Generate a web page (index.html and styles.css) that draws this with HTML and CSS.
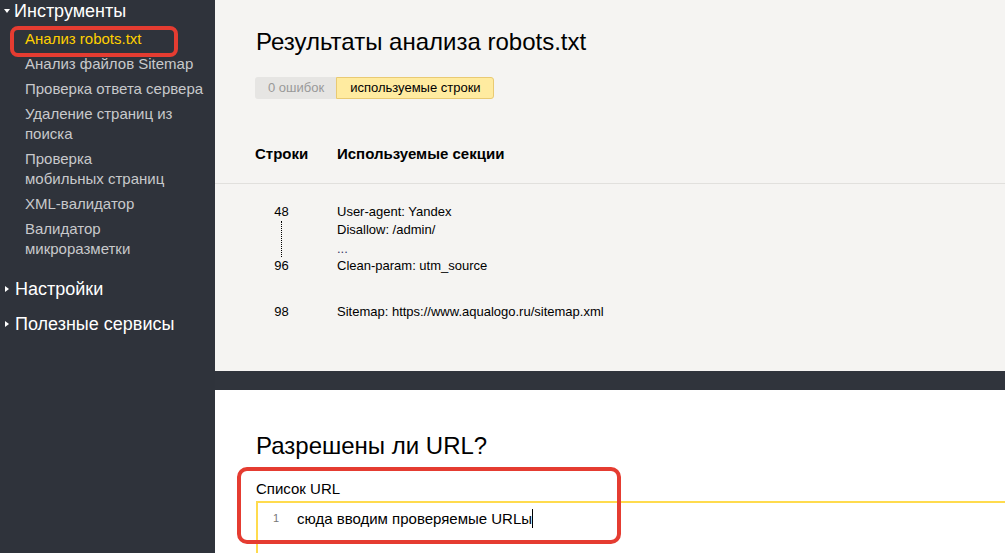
FILE: index.html
```html
<!DOCTYPE html>
<html lang="ru">
<head>
    <meta charset="UTF-8">
    <title>Анализ robots.txt</title>
    <link rel="stylesheet" href="styles.css">
</head>
<body>
    <div class="page">
        <!-- боковое меню -->
        <div class="sidebar">
            <div class="nav-group">
                <div class="nav-title"><span class="arrow-down"></span>Инструменты</div>
                <ul class="nav-list">
                    <li class="active">Анализ robots.txt</li>
                    <li>Анализ файлов Sitemap</li>
                    <li>Проверка ответа сервера</li>
                    <li>Удаление страниц из поиска</li>
                    <li>Проверка<br>мобильных страниц</li>
                    <li>XML-валидатор</li>
                    <li>Валидатор<br>микроразметки</li>
                </ul>
            </div>
            <div class="nav-group">
                <div class="nav-title"><span class="arrow-right"></span>Настройки</div>
            </div>
            <div class="nav-group">
                <div class="nav-title"><span class="arrow-right"></span>Полезные сервисы</div>
            </div>
            <div class="mark mark-nav"></div>
        </div>

        <div class="main">
            <!-- результаты анализа -->
            <div class="results">
                <h1 class="heading">Результаты анализа robots.txt</h1>
                <div class="tabs">
                    <div class="tab">0 ошибок</div>
                    <div class="tab tab-active">используемые строки</div>
                </div>
                <div class="table-head">
                    <div class="col-num">Строки</div>
                    <div>Используемые секции</div>
                </div>
                <div class="table-body">
                    <div class="row">
                        <div class="col-num range">
                            <span>48</span>
                            <span class="dots"></span>
                            <span>96</span>
                        </div>
                        <div class="lines">
                            <div>User-agent: Yandex</div>
                            <div>Disallow: /admin/</div>
                            <div class="ellipsis">...</div>
                            <div>Clean-param: utm_source</div>
                        </div>
                    </div>
                    <div class="row row-gap">
                        <div class="col-num">98</div>
                        <div class="lines">
                            <div>Sitemap: https://www.aqualogo.ru/sitemap.xml</div>
                        </div>
                    </div>
                </div>
            </div>

            <div class="divider"></div>

            <!-- проверка URL -->
            <div class="check">
                <h2 class="heading">Разрешены ли URL?</h2>
                <div class="label">Список URL</div>
                <div class="editor">
                    <div class="editor-line">
                        <span class="line-no">1</span>
                        <span class="line-text">сюда вводим проверяемые URLы</span><span class="caret"></span>
                    </div>
                </div>
                <div class="mark mark-urls"></div>
            </div>
        </div>
    </div>
</body>
</html>
```

FILE: styles.css
```css
body {
    margin: 0;
    font-family: "Liberation Sans", Arial, sans-serif;
    color: #000;
    overflow: hidden;
}

.page {
    display: flex;
    width: 1005px;
    height: 553px;
    overflow: hidden;
}

/* боковое меню */
.sidebar {
    position: relative;
    width: 215px;
    flex-shrink: 0;
    background-color: #2f333b;
    display: flex;
    flex-direction: column;
    gap: 13px;
}

.nav-title {
    display: flex;
    align-items: center;
    font-size: 18px;
    line-height: 22px;
    color: #fff;
}

.arrow-down {
    width: 0;
    height: 0;
    margin: 0 4px 0 4px;
    border-left: 3.5px solid transparent;
    border-right: 3.5px solid transparent;
    border-top: 4px solid #fff;
}

.arrow-right {
    width: 0;
    height: 0;
    margin: 0 6px 0 5px;
    border-top: 3.5px solid transparent;
    border-bottom: 3.5px solid transparent;
    border-left: 4px solid #fff;
}

.nav-list {
    list-style: none;
    margin: 7px 0 0;
    padding: 0 10px 6px 25px;
    display: flex;
    flex-direction: column;
    gap: 5px;
}

    .nav-list li {
        font-size: 15px;
        line-height: 20px;
        color: #c8c9cb;
    }

    .nav-list li.active {
        color: #ffd000;
    }

/* красные пометки поверх скриншота */
.mark {
    position: absolute;
    border: 4px solid #e53c31;
    border-radius: 8px;
    box-sizing: border-box;
}

.mark-nav {
    left: 10px;
    top: 26px;
    width: 168px;
    height: 31px;
}

.mark-urls {
    left: 22px;
    top: 77px;
    width: 384px;
    height: 77px;
    border-radius: 10px;
}

/* основная часть */
.main {
    flex: 1;
    display: flex;
    flex-direction: column;
    min-width: 0;
}

    .main > div {
        flex-shrink: 0;
    }

.heading {
    margin: 0;
    font-size: 24px;
    line-height: 28px;
    font-weight: normal;
}

.results {
    background-color: #f5f4f2;
    padding-top: 28px;
    padding-bottom: 50px;
}

    .results .heading {
        padding-left: 41px;
    }

.tabs {
    display: flex;
    margin: 21px 0 0 40px;
    font-size: 13px;
}

.tab {
    height: 22px;
    line-height: 22px;
    padding: 0 12px 0 13px;
    background-color: #e6e5e3;
    color: #999;
    border-radius: 3px 0 0 3px;
}

.tab-active {
    box-sizing: border-box;
    padding: 0 12px 0 13px;
    line-height: 20px;
    background-color: #ffeba0;
    border: 1px solid #e9ca73;
    color: #000;
    border-radius: 0 3px 3px 0;
}

.table-head {
    display: flex;
    gap: 29px;
    margin-top: 45px;
    padding: 0 0 19px 40px;
    border-bottom: 1px solid #e1e0dd;
    font-size: 15px;
    line-height: 20px;
    font-weight: bold;
}

.table-body {
    padding: 19px 0 0 40px;
    font-size: 13px;
    line-height: 18px;
}

.row {
    display: flex;
    gap: 29px;
}

.row-gap {
    margin-top: 28px;
}

.col-num {
    width: 53px;
    flex-shrink: 0;
}

.table-body .col-num {
    text-align: center;
}

.range {
    display: flex;
    flex-direction: column;
    align-items: center;
}

.dots {
    flex: 1;
    width: 0;
    border-left: 1px dotted #000;
}

.ellipsis {
    line-height: 16px;
    padding-top: 2px;
    color: #3a3a6a;
}

.divider {
    height: 19px;
    background-color: #30343c;
}

.check {
    position: relative;
    flex: 1;
    background-color: #fff;
    padding: 42px 0 0 41px;
}

.label {
    margin-top: 20px;
    font-size: 15px;
    line-height: 18px;
}

.editor {
    margin-top: 3px;
    height: 80px;
    border-top: 2px solid #ffdb4d;
    border-left: 2px solid #ffdb4d;
    padding-top: 6px;
}

.editor-line {
    display: flex;
    align-items: center;
    height: 18px;
    font-size: 15px;
}

.line-no {
    width: 39px;
    padding-left: 15px;
    box-sizing: border-box;
    font-size: 11px;
    color: #777;
}

.caret {
    display: inline-block;
    width: 0;
    height: 19px;
    border-left: 1px solid #000;
}
```
